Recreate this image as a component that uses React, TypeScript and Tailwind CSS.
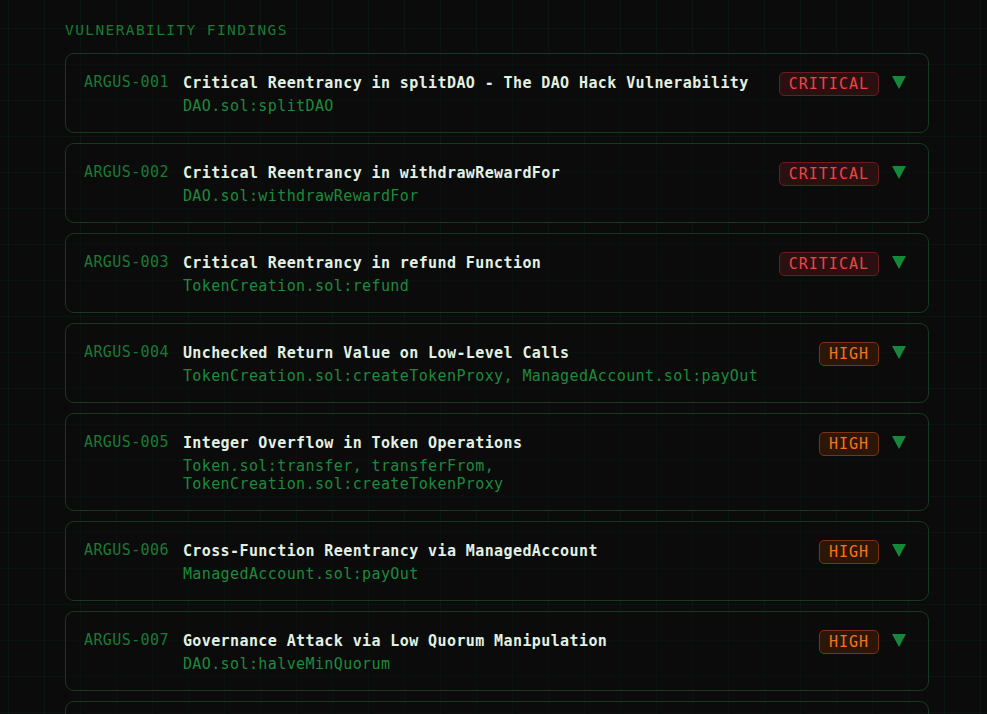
type Severity = "CRITICAL" | "HIGH";

interface Finding {
  id: string;
  title: string;
  location: string;
  severity: Severity;
}

const findings: Finding[] = [
  {
    id: "ARGUS-001",
    title: "Critical Reentrancy in splitDAO - The DAO Hack Vulnerability",
    location: "DAO.sol:splitDAO",
    severity: "CRITICAL",
  },
  {
    id: "ARGUS-002",
    title: "Critical Reentrancy in withdrawRewardFor",
    location: "DAO.sol:withdrawRewardFor",
    severity: "CRITICAL",
  },
  {
    id: "ARGUS-003",
    title: "Critical Reentrancy in refund Function",
    location: "TokenCreation.sol:refund",
    severity: "CRITICAL",
  },
  {
    id: "ARGUS-004",
    title: "Unchecked Return Value on Low-Level Calls",
    location: "TokenCreation.sol:createTokenProxy, ManagedAccount.sol:payOut",
    severity: "HIGH",
  },
  {
    id: "ARGUS-005",
    title: "Integer Overflow in Token Operations",
    location: "Token.sol:transfer, transferFrom, TokenCreation.sol:createTokenProxy",
    severity: "HIGH",
  },
  {
    id: "ARGUS-006",
    title: "Cross-Function Reentrancy via ManagedAccount",
    location: "ManagedAccount.sol:payOut",
    severity: "HIGH",
  },
  {
    id: "ARGUS-007",
    title: "Governance Attack via Low Quorum Manipulation",
    location: "DAO.sol:halveMinQuorum",
    severity: "HIGH",
  },
  {
    id: "ARGUS-008",
    title: "Proposal Deposit Can Be Locked Forever",
    location: "DAO.sol:executeProposal",
    severity: "HIGH",
  },
];

function SeverityBadge({ severity }: { severity: Severity }) {
  if (severity === "CRITICAL") {
    return (
      <span className="border border-[#6b1d1d] bg-[#2a1010] text-[#ef4444] rounded-[5px] px-[9px] leading-[22px] text-[15px] tracking-[1px]">
        CRITICAL
      </span>
    );
  }
  return (
    <span className="border border-[#7a3412] bg-[#2b1608] text-[#f97316] rounded-[5px] px-[9px] leading-[22px] text-[15px] tracking-[1px]">
      HIGH
    </span>
  );
}

function FindingCard({ finding }: { finding: Finding }) {
  return (
    <div className="flex items-start gap-4 border border-[#163a20] rounded-[9px] pl-[18px] pr-[22px] pt-[18px] pb-[17px] bg-[#0b0d0b]/40">
      <div className="flex-1 flex items-start gap-[14px] min-w-0">
        <span className="shrink-0 text-[15px] leading-[21px] tracking-[0.4px] text-[#1b7a36]">
          {finding.id}
        </span>
        <div className="min-w-0">
          <div className="text-[15px] leading-[22px] tracking-[0.4px] font-bold text-[#e3f1e3]">
            {finding.title}
          </div>
          <div className="mt-[3px] text-[15px] leading-[18px] tracking-[0.4px] text-[#1e8a3d]">
            {finding.location}
          </div>
        </div>
      </div>
      <div className="flex items-start gap-[13px] shrink-0">
        <SeverityBadge severity={finding.severity} />
        <svg width="14" height="13" viewBox="0 0 14 13" className="mt-[4px]">
          <path d="M0 0 L14 0 L7 13 Z" fill="#15883a" />
        </svg>
      </div>
    </div>
  );
}

export default function App() {
  return (
    <div className="min-h-screen w-full bg-[#0a0b0a] bg-[linear-gradient(to_right,rgba(34,197,94,0.06)_1px,transparent_1px),linear-gradient(to_bottom,rgba(34,197,94,0.05)_1px,transparent_1px)] bg-[length:36px_36px] bg-[position:8px_28px] font-['DejaVu_Sans_Mono',monospace] overflow-hidden">
      <div className="pl-[65px] pt-[20px] pb-10 w-[929px]">
        <h2 className="text-[14.5px] leading-[20px] tracking-[1.4px] text-[#1a7a34] mb-[13px]">
          VULNERABILITY FINDINGS
        </h2>
        <div className="flex flex-col gap-[10px]">
          {findings.map((f) => (
            <FindingCard key={f.id} finding={f} />
          ))}
        </div>
      </div>
    </div>
  );
}
